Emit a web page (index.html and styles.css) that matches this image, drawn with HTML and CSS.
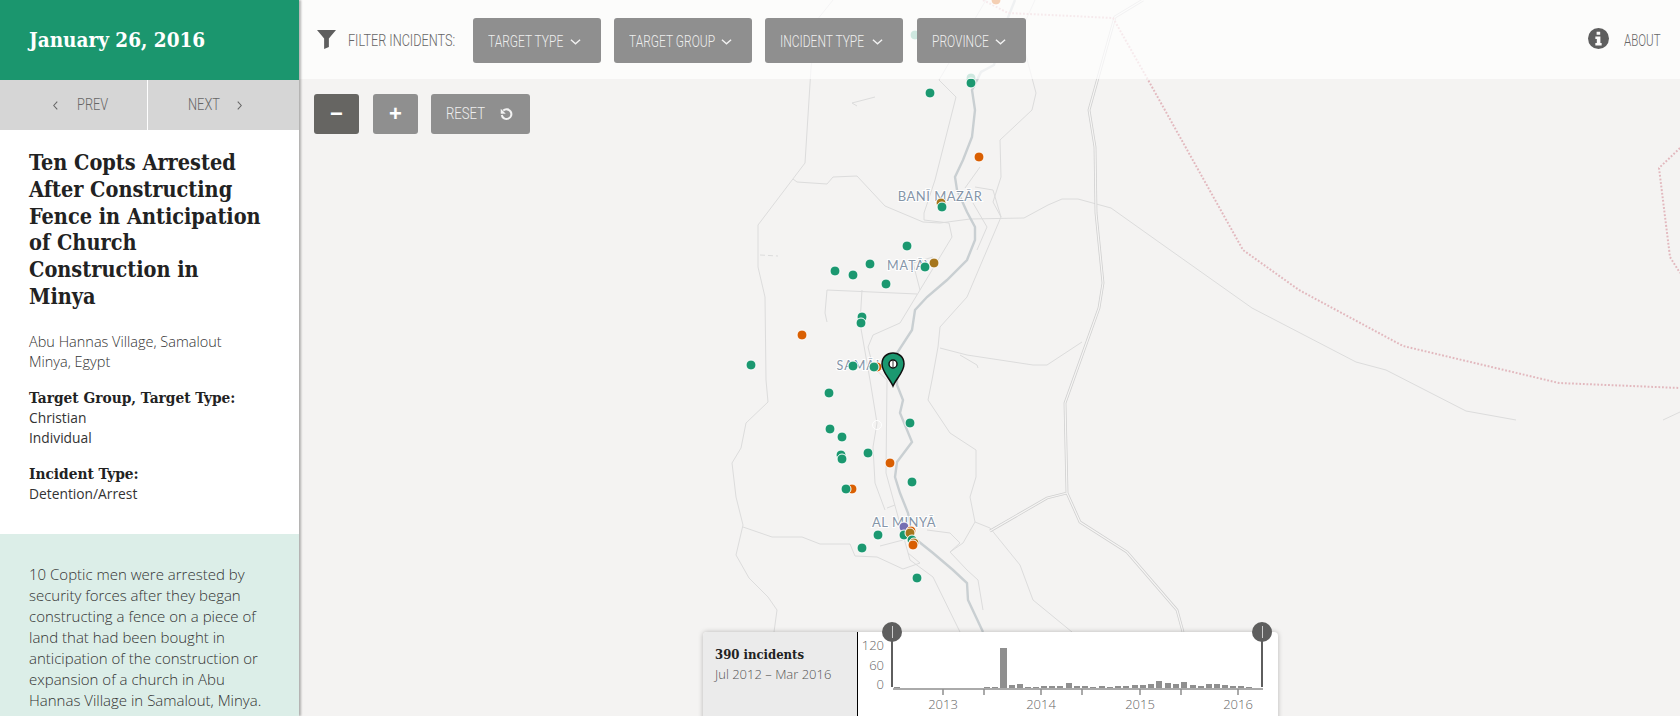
FILE: index.html
```html
<!DOCTYPE html>
<html lang="en">
<head>
<meta charset="UTF-8">
<meta name="viewport" content="width=device-width, initial-scale=1.0">
<title>Incident Map</title>
<link rel="stylesheet" href="styles.css">
</head>
<body>

<aside class="sidebar">
  <div class="date">January 26, 2016</div>
  <div class="pager">
    <a class="pager-btn pager-prev">
      <svg class="pager-icon" viewBox="0 0 8 12"><path d="M6 1.5 2 6l4 4.5"/></svg>
      <span class="cond pager-label">PREV</span>
    </a>
    <a class="pager-btn pager-next">
      <span class="cond pager-label">NEXT</span>
      <svg class="pager-icon" viewBox="0 0 8 12"><path d="M2 1.5 6 6l-4 4.5"/></svg>
    </a>
  </div>
  <div class="details">
    <h1>Ten Copts Arrested After Constructing Fence in Anticipation of Church Construction in Minya</h1>
    <p class="place">Abu Hannas Village, Samalout<br>Minya, Egypt</p>
    <h2>Target Group, Target Type:</h2>
    <p class="fact">Christian<br>Individual</p>
    <h2>Incident Type:</h2>
    <p class="fact">Detention/Arrest</p>
  </div>
  <div class="summary">
    <p>10 Coptic men were arrested by security forces after they began constructing a fence on a piece of land that had been bought in anticipation of the construction or expansion of a church in Abu Hannas Village in Samalout, Minya.</p>
  </div>
</aside>

<main class="map">
  <svg class="basemap" viewBox="299 0 1381 716">
    <g class="roads">
      <path d="M833 0 817 20 811 68 805 163 758 225 758 267 765 297 766 380 768 402 746 423 741 448 732 463 736 497 743 525 736 555 749 578 768 597 777 610 774 632"/>
      <path d="M793 179 797 182 827 184 833 177 857 176 885 206 923 222 940 223 970 219 1024 218 1048 205 1062 199 1078 199 1111 208 1156 240 1252 308 1356 362 1386 370 1466 411 1516 420"/>
      <path d="M1035 0 1020 33 1036 93 1032 110 1000 140 1001 177 993 202 1001 217 967 297 940 327 938 347 932 380 928 400 950 433 976 450 976 477 970 497 975 522 963 543 950 552"/>
      <path d="M986 0 939 80 956 97 935 180 924 213 924 220 949 223 952 237 920 290 900 323 873 335 868 347 873 367 887 380 886 473 897 513 910 560 933 577 960 632"/>
      <path d="M827 290 917 294M827 290 825 313 827 322M862 290 860 323 870 380 877 423 873 447 875 483 885 510"/>
      <path d="M940 348 967 355 1033 365 1047 365 1082 342M960 355 977 365 978 368"/>
      <path d="M913 263 920 290M913 263 933 257"/>
      <path d="M980 167 965 188M975 187 993 190 1001 217M973 203 987 227 977 250"/>
      <path d="M887 508 895 505M880 546 903 540"/>
      <path d="M743 527 772 537 802 537 820 544 850 544 855 556 877 557 903 569 920 563 908 553"/>
      <path d="M975 522 990 528 1020 565 1033 600 1072 632"/>
      <path d="M927 530 950 533 960 543 950 552 967 570 978 580 983 610"/>
      <path d="M852 103 875 97M852 103 857 106"/>
      <path stroke-dasharray="5 3" d="M760 255 778 256"/>
      <path d="M1663 420 1680 412"/>
    </g>
    <g class="highway">
      <path class="hw-edge" d="M1143 0 1115 17 1089 110 1095 147 1096 213 1103 283 1099 308 1065 403 1067 493 1080 522 1127 552 1177 610 1183 632M1067 493 1047 498 990 531"/>
      <path class="hw-core" d="M1143 0 1115 17 1089 110 1095 147 1096 213 1103 283 1099 308 1065 403 1067 493 1080 522 1127 552 1177 610 1183 632M1067 493 1047 498 990 531"/>
    </g>
    <path class="river" d="M1015 0 1003 30 994 65 981 72 972 90 975 110 972 137 963 160 955 177 957 190 967 212 975 227 975 240 967 260 947 280 927 297 915 310 912 330 897 353 897 385 903 400 900 413 912 442 897 462 895 477 900 493 908 513 913 537 933 553 953 570 967 583 968 600 983 632"/>
    <path class="border" d="M983 0 1008 13 1113 18 1147 78 1243 250 1299 290 1403 346 1559 383 1680 388"/>
    <path class="border" d="M1680 148 1659 168 1670 257 1680 273"/>

    <g class="labels">
      <text x="940" y="201">BANĪ MAZĀR</text>
      <text x="910" y="270" class="small">MAṬĀY</text>
      <text x="869" y="370" class="small">SAMĀLŪṬ</text>
      <text x="904" y="527">AL MINYĀ</text>
    </g>

    <g class="dots">
      <circle class="brown" cx="941" cy="203" r="5"/>
      <circle class="green" cx="942" cy="207" r="5"/>
      <circle class="orange" cx="996" cy="0" r="5"/>
      <circle class="green" cx="915" cy="35" r="5" opacity=".7"/>
      <circle class="green" cx="971" cy="78" r="5" opacity=".7"/>
      <circle class="green" cx="971" cy="83" r="5"/>
      <circle class="green" cx="930" cy="93" r="5"/>
      <circle class="orange" cx="979" cy="157" r="5"/>
      <circle class="green" cx="907" cy="246" r="5"/>
      <circle class="brown" cx="934" cy="263" r="5"/>
      <circle class="green" cx="925" cy="267" r="5"/>
      <circle class="green" cx="835" cy="271" r="5"/>
      <circle class="green" cx="870" cy="264" r="5"/>
      <circle class="green" cx="853" cy="275" r="5"/>
      <circle class="green" cx="886" cy="284" r="5"/>
      <circle class="green" cx="862" cy="317" r="5"/>
      <circle class="green" cx="861" cy="323" r="5"/>
      <circle class="orange" cx="802" cy="335" r="5"/>
      <circle class="green" cx="751" cy="365" r="5"/>
      <circle class="green" cx="853" cy="366" r="5"/>
      <circle class="orange" cx="877" cy="367" r="5"/>
      <circle class="green" cx="874" cy="367" r="5"/>
      <circle class="green" cx="829" cy="393" r="5"/>
      <circle class="green" cx="910" cy="423" r="5"/>
      <circle class="ring" cx="877" cy="425" r="4.5"/>
      <circle class="green" cx="830" cy="429" r="5"/>
      <circle class="green" cx="842" cy="437" r="5"/>
      <circle class="green" cx="868" cy="453" r="5"/>
      <circle class="green" cx="841" cy="455" r="5"/>
      <circle class="green" cx="842" cy="459" r="5"/>
      <circle class="orange" cx="890" cy="463" r="5"/>
      <circle class="green" cx="912" cy="482" r="5"/>
      <circle class="orange" cx="852" cy="489" r="5"/>
      <circle class="green" cx="846" cy="489" r="5"/>
      <circle class="purple" cx="904" cy="527" r="5"/>
      <circle class="green" cx="878" cy="535" r="5"/>
      <circle class="green" cx="904" cy="535" r="5"/>
      <circle class="orange" cx="911" cy="531" r="5"/>
      <circle class="brown" cx="910" cy="533" r="5"/>
      <circle class="green" cx="912" cy="540" r="5"/>
      <circle class="brown" cx="914" cy="543" r="5"/>
      <circle class="orange" cx="913" cy="545" r="5"/>
      <circle class="green" cx="862" cy="548" r="5"/>
      <circle class="green" cx="917" cy="578" r="5"/>
    </g>

    <g class="pin">
      <path d="M893 386C890 379 882 372 882 364 882 357 887 353 893 353S904 357 904 364C904 372 896 379 893 386Z"/>
      <circle cx="893" cy="364" r="4"/>
      <path class="pin-line" d="M893 361V367"/>
    </g>
  </svg>

  <header class="topbar">
    <svg class="filter-icon" viewBox="0 0 20 20"><path d="M0 0H20L12.500 9V18L7.500 20V9Z"/></svg>
    <span class="cond filter-label">FILTER INCIDENTS:</span>
    <div class="filters">
      <button class="filter-btn w-type"><span class="cond">TARGET TYPE</span><svg viewBox="0 0 12 8"><path d="M1 1.500 6 6l5-4.500"/></svg></button>
      <button class="filter-btn w-group"><span class="cond">TARGET GROUP</span><svg viewBox="0 0 12 8"><path d="M1 1.500 6 6l5-4.500"/></svg></button>
      <button class="filter-btn w-incident"><span class="cond">INCIDENT TYPE</span><svg viewBox="0 0 12 8"><path d="M1 1.500 6 6l5-4.500"/></svg></button>
      <button class="filter-btn w-province"><span class="cond">PROVINCE</span><svg viewBox="0 0 12 8"><path d="M1 1.500 6 6l5-4.500"/></svg></button>
    </div>
    <a class="about">
      <svg class="info-icon" viewBox="0 0 20 20">
        <circle cx="10" cy="10" r="10"/>
        <path class="info-mark" d="M8.200 3.500h3.400v3h-3.400zM7 8h4.800v6.200H13v2.500H7v-2.500h1.400v-3.700H7z"/>
      </svg>
      <span class="cond about-label">ABOUT</span>
    </a>
  </header>

  <div class="zoom-controls">
    <button class="zoom-btn active">&minus;</button>
    <button class="zoom-btn">+</button>
    <button class="reset-btn"><span class="cond reset-label">RESET</span>
      <svg viewBox="0 0 14 14"><path d="M3.500 2.800A5.200 5.200 0 1 1 1.900 7.500"/><path class="fill" d="M.8 .8v5.400h5.400z"/></svg>
    </button>
  </div>

  <section class="timeline">
    <div class="timeline-info">
      <strong>390 incidents</strong>
      <span>Jul 2012 – Mar 2016</span>
    </div>
    <svg class="chart" viewBox="858 620 420 96">
      <g class="y-labels">
        <text x="884" y="650">120</text>
        <text x="884" y="670">60</text>
        <text x="884" y="689">0</text>
      </g>
      <g class="bars">
        <rect x="894" y="687" width="6" height="1"/>
        <rect x="984" y="687" width="6" height="1"/><rect x="992" y="687" width="6" height="1"/>
        <rect x="1000" y="648" width="7" height="40"/><rect x="1009" y="685" width="6" height="3"/>
        <rect x="1017" y="684" width="6" height="4"/><rect x="1025" y="687" width="6" height="1"/>
        <rect x="1033" y="687" width="6" height="1"/><rect x="1041" y="686" width="6" height="2"/>
        <rect x="1049" y="686" width="6" height="2"/><rect x="1057" y="686" width="6" height="2"/>
        <rect x="1066" y="683" width="6" height="5"/><rect x="1074" y="686" width="6" height="2"/>
        <rect x="1082" y="686" width="6" height="2"/><rect x="1090" y="687" width="6" height="1"/>
        <rect x="1099" y="686" width="6" height="2"/><rect x="1107" y="687" width="6" height="1"/>
        <rect x="1115" y="686" width="6" height="2"/><rect x="1123" y="686" width="6" height="2"/>
        <rect x="1132" y="685" width="6" height="3"/><rect x="1140" y="685" width="6" height="3"/>
        <rect x="1148" y="684" width="6" height="4"/><rect x="1156" y="681" width="6" height="7"/>
        <rect x="1165" y="683" width="6" height="5"/><rect x="1173" y="684" width="6" height="4"/>
        <rect x="1181" y="682" width="6" height="6"/><rect x="1190" y="685" width="6" height="3"/>
        <rect x="1198" y="686" width="6" height="2"/><rect x="1206" y="684" width="6" height="4"/>
        <rect x="1214" y="684" width="6" height="4"/><rect x="1222" y="685" width="6" height="3"/>
        <rect x="1230" y="686" width="6" height="2"/><rect x="1238" y="686" width="6" height="2"/>
        <rect x="1246" y="687" width="6" height="1"/>
      </g>
      <path class="axis" d="M893 689H1263M943 689v6M984 689v6M1041 689v6M1082 689v6M1140 689v6M1181 689v6M1238 689v6"/>
      <g class="x-labels">
        <text x="943" y="709">2013</text>
        <text x="1041" y="709">2014</text>
        <text x="1140" y="709">2015</text>
        <text x="1238" y="709">2016</text>
      </g>
    </svg>
    <div class="handle handle-left"></div>
    <div class="handle handle-right"></div>
  </section>
</main>

</body>
</html>
```

FILE: styles.css
```css
*{
    box-sizing:border-box;
}

html,body{
    height:716px;
}

body{
    margin:0;
    display:flex;
    overflow:hidden;
    font-family:"Open Sans",sans-serif;
    background:#f4f3f2;
    color:#333;
}

/* no narrow face is installed, so the UI labels get squeezed */
.cond{
    display:block;
    flex:1;
    min-width:0;
    text-align:left;
    white-space:nowrap;
    font:300 16px/20px Roboto,sans-serif;
    transform:scaleX(0.75);
    transform-origin:left center;
}

/* sidebar */

.sidebar{
    width:299px;
    flex:none;
    height:716px;
    overflow:hidden;
    background:white;
    box-shadow:2px 0 2px rgba(0,0,0,0.28);
    position:relative;
    z-index:5;
}

.date{
    height:80px;
    padding:0 29px;
    background:#1b966e;
    color:white;
    font:bold 20.500px/80px "DejaVu Serif Condensed",serif;
}

.pager{
    display:flex;
    height:50px;
    background:#d6d6d6;
}

.pager-btn{
    flex:1;
    display:flex;
    align-items:center;
    justify-content:center;
    gap:18px;
    color:#666;
}

.pager-prev{
    padding-left:12px;
    border-right:1px solid white;
}

.pager-next{
    padding-right:16px;
}

.pager-label{
    flex:none;
    width:30px;
    transform:scaleX(0.8);
}

.pager-icon{
    width:7px;
    height:11px;
    fill:none;
    stroke:#666;
    stroke-width:1.2;
}

.details{
    height:404px;
    padding:20px 34px 0 29px;
}

h1{
    margin:0 0 21px;
    font:bold 21.500px/26.800px "DejaVu Serif Condensed",serif;
    color:#222;
}

h2{
    margin:0;
    font:bold 15.300px/20px "DejaVu Serif Condensed",serif;
    color:#222;
    white-space:nowrap;
}

.place{
    margin:0 0 16px;
    font-size:14.500px;
    line-height:20px;
    font-weight:300;
    white-space:nowrap;
}

.fact{
    margin:0 0 16px;
    font-size:13.800px;
    line-height:20px;
}

.summary{
    background:#dceee8;
    padding:30px 29px;
    font-size:15px;
    line-height:21px;
    font-weight:300;
    height:182px;
}

.summary p{
    margin:0;
}

/* map */

.map{
    flex:1;
    position:relative;
    height:716px;
}

.basemap{
    display:block;
    width:100%;
    height:716px;
}

.roads path{
    fill:none;
    stroke:#dcdcdc;
    stroke-width:1;
}

.hw-edge{
    fill:none;
    stroke:#d0d0d0;
    stroke-width:2.800;
}

.hw-core{
    fill:none;
    stroke:#f6f5f4;
    stroke-width:1.200;
}

.river{
    fill:none;
    stroke:#c9cfd2;
    stroke-width:2.400;
}

.border{
    fill:none;
    stroke:#e2b8be;
    stroke-width:2;
    stroke-dasharray:1.800 1.800;
}

.labels text{
    font:13px Lato,sans-serif;
    letter-spacing:0.500px;
    text-anchor:middle;
    fill:#8595a8;
    stroke:white;
    stroke-width:2px;
    paint-order:stroke;
}

.labels .small{
    font-size:12.500px;
    letter-spacing:1px;
}

.dots circle{
    stroke:white;
    stroke-width:1;
}

.green{ fill:#1b9870; }
.orange{ fill:#d95f02; }
.brown{ fill:#a6761d; }
.purple{ fill:#7570b3; }
.dots .ring{ fill:none; }

.pin path{
    fill:#1b9870;
    stroke:#111;
    stroke-width:1.500;
}

.pin circle{
    fill:white;
    stroke:#111;
    stroke-width:1.500;
}

.pin .pin-line{
    stroke:#777;
    stroke-width:1.500;
}

/* top bar */

.topbar{
    position:absolute;
    top:0;
    left:0;
    right:0;
    height:79px;
    padding:18px 20px 0 18px;
    display:flex;
    align-items:flex-start;
    background:rgba(255,255,255,0.7);
}

.filter-icon{
    width:19px;
    height:19px;
    margin-top:12px;
    fill:#5e5e5e;
}

.filter-label{
    flex:none;
    width:106px;
    margin:13px 19px 0 12px;
    color:#666;
    transform:scaleX(0.79);
}

.filters{
    display:flex;
    gap:13px;
}

.filter-btn{
    height:45px;
    padding:2px 20px 0 15px;
    display:flex;
    align-items:center;
    border:none;
    border-radius:3px;
    background:#8f8f8f;
    color:#eee;
}

.filter-btn svg{
    flex:none;
    width:11px;
    height:8px;
    fill:none;
    stroke:#f2f2f2;
    stroke-width:1.500;
}

.w-type{ width:128px; }
.w-group{ width:138px; }
.w-incident{ width:138px; }
.w-province{ width:109px; margin-left:1px; }

.about{
    margin-left:auto;
    display:flex;
    align-items:flex-start;
    gap:15px;
    color:#666;
}

.about-label{
    flex:none;
    width:36px;
    margin-top:13px;
    transform:scaleX(0.72);
}

.info-icon{
    width:21px;
    height:21px;
    margin-top:10px;
    fill:#5e5e5e;
}

.info-icon .info-mark{
    fill:#fbfaf9;
}

/* zoom controls */

.zoom-controls{
    position:absolute;
    top:94px;
    left:15px;
    display:flex;
    gap:14px;
}

.zoom-btn,.reset-btn{
    height:40px;
    border:none;
    border-radius:3px;
    background:#8f8f8f;
    color:white;
}

.zoom-btn{
    width:45px;
    font:bold 22px "Liberation Sans",sans-serif;
}

.zoom-btn.active{
    background:#666562;
}

.reset-btn{
    width:99px;
    margin-left:-1px;
    padding:0 17px 0 15px;
    display:flex;
    align-items:center;
    color:#eee;
}

.reset-label{
    transform:scaleX(0.82);
}

.reset-btn svg{
    flex:none;
    width:13px;
    height:13px;
    fill:none;
    stroke:#f2f2f2;
    stroke-width:2.200;
}

.reset-btn .fill{
    fill:#f2f2f2;
    stroke:none;
}

/* timeline */

.timeline{
    position:absolute;
    top:632px;
    left:404px;
    width:575px;
    height:100px;
    display:flex;
    background:white;
    border-radius:4px;
    box-shadow:0 0 5px rgba(0,0,0,0.25);
}

.timeline-info{
    width:155px;
    padding:14px 12px;
    display:flex;
    flex-direction:column;
    gap:1px;
    background:#ebebeb;
    border-right:1px solid black;
    border-radius:4px 0 0 0;
    font-size:13px;
    font-weight:300;
    color:#555;
}

.timeline-info strong{
    font:bold 13px/18px "DejaVu Serif Condensed",serif;
    color:#222;
}

.chart{
    position:absolute;
    left:155px;
    top:-12px;
    width:420px;
    height:96px;
    overflow:visible;
}

.chart text{
    font:300 13px "Open Sans",sans-serif;
    fill:#666;
}

.y-labels text{
    text-anchor:end;
}

.x-labels text{
    text-anchor:middle;
}

.bars rect{
    fill:#8f8f8f;
}

.axis{
    fill:none;
    stroke:#8f8f8f;
    stroke-width:1.500;
}

.handle{
    position:absolute;
    top:-10px;
    width:20px;
    height:20px;
    border-radius:50%;
    background:#5e5e5e;
}

.handle::before{
    content:"";
    position:absolute;
    left:9.500px;
    top:4px;
    width:1px;
    height:12px;
    background:#ccc;
}

.handle::after{
    content:"";
    position:absolute;
    left:9px;
    top:18px;
    width:2px;
    height:47px;
    background:#5e5e5e;
}

.handle-left{ left:179px; }
.handle-right{ left:549px; }
```
